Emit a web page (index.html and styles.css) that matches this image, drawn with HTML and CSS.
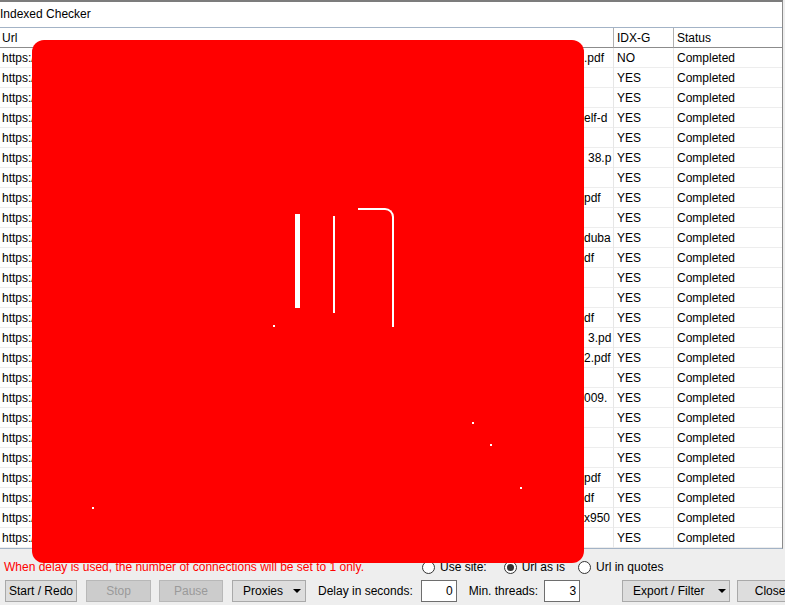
FILE: index.html
```html
<!DOCTYPE html>
<html lang="en">
<head>
  <meta charset="UTF-8">
  <title>Indexed Checker</title>
  <link rel="stylesheet" href="styles.css">
</head>
<body>
  <div class="panel">
    <div class="panel-title">Indexed Checker</div>

    <!-- Results grid -->
    <table class="results">
      <thead>
        <tr>
          <th class="col-url">Url</th>
          <th class="col-idx">IDX-G</th>
          <th class="col-status">Status</th>
        </tr>
      </thead>
      <tbody>
        <tr><td><div class="url"><span>https://</span><span class="tail">.pdf</span></div></td><td>NO</td><td>Completed</td></tr>
        <tr><td><div class="url"><span>https://</span><span class="tail"></span></div></td><td>YES</td><td>Completed</td></tr>
        <tr><td><div class="url"><span>https://</span><span class="tail"></span></div></td><td>YES</td><td>Completed</td></tr>
        <tr><td><div class="url"><span>https://</span><span class="tail">elf-d</span></div></td><td>YES</td><td>Completed</td></tr>
        <tr><td><div class="url"><span>https://</span><span class="tail"></span></div></td><td>YES</td><td>Completed</td></tr>
        <tr><td><div class="url"><span>https://</span><span class="tail shift">38.p</span></div></td><td>YES</td><td>Completed</td></tr>
        <tr><td><div class="url"><span>https://</span><span class="tail"></span></div></td><td>YES</td><td>Completed</td></tr>
        <tr><td><div class="url"><span>https://</span><span class="tail">pdf</span></div></td><td>YES</td><td>Completed</td></tr>
        <tr><td><div class="url"><span>https://</span><span class="tail"></span></div></td><td>YES</td><td>Completed</td></tr>
        <tr><td><div class="url"><span>https://</span><span class="tail">duba</span></div></td><td>YES</td><td>Completed</td></tr>
        <tr><td><div class="url"><span>https://</span><span class="tail">df</span></div></td><td>YES</td><td>Completed</td></tr>
        <tr><td><div class="url"><span>https://</span><span class="tail"></span></div></td><td>YES</td><td>Completed</td></tr>
        <tr><td><div class="url"><span>https://</span><span class="tail"></span></div></td><td>YES</td><td>Completed</td></tr>
        <tr><td><div class="url"><span>https://</span><span class="tail">df</span></div></td><td>YES</td><td>Completed</td></tr>
        <tr><td><div class="url"><span>https://</span><span class="tail shift">3.pd</span></div></td><td>YES</td><td>Completed</td></tr>
        <tr><td><div class="url"><span>https://</span><span class="tail">2.pdf</span></div></td><td>YES</td><td>Completed</td></tr>
        <tr><td><div class="url"><span>https://</span><span class="tail"></span></div></td><td>YES</td><td>Completed</td></tr>
        <tr><td><div class="url"><span>https://</span><span class="tail">009.</span></div></td><td>YES</td><td>Completed</td></tr>
        <tr><td><div class="url"><span>https://</span><span class="tail"></span></div></td><td>YES</td><td>Completed</td></tr>
        <tr><td><div class="url"><span>https://</span><span class="tail"></span></div></td><td>YES</td><td>Completed</td></tr>
        <tr><td><div class="url"><span>https://</span><span class="tail"></span></div></td><td>YES</td><td>Completed</td></tr>
        <tr><td><div class="url"><span>https://</span><span class="tail">pdf</span></div></td><td>YES</td><td>Completed</td></tr>
        <tr><td><div class="url"><span>https://</span><span class="tail">df</span></div></td><td>YES</td><td>Completed</td></tr>
        <tr><td><div class="url"><span>https://</span><span class="tail">x950</span></div></td><td>YES</td><td>Completed</td></tr>
        <tr><td><div class="url"><span>https://</span><span class="tail"></span></div></td><td>YES</td><td>Completed</td></tr>
      </tbody>
    </table>
  </div>

  <!-- Options + controls -->
  <div class="footer">
    <div class="options-row">
      <div class="warning">When delay is used, the number of connections will be set to 1 only.</div>
      <label class="radio first"><input type="radio" name="mode"> Use site:</label>
      <label class="radio second"><input type="radio" name="mode" checked> Url as is</label>
      <label class="radio"><input type="radio" name="mode"> Url in quotes</label>
    </div>
    <div class="controls-row">
      <button class="btn btn-start">Start / Redo</button>
      <button class="btn btn-stop" disabled>Stop</button>
      <button class="btn btn-pause" disabled>Pause</button>
      <button class="btn btn-menu btn-proxies">Proxies <span class="caret"></span></button>
      <span class="field-label delay-label">Delay in seconds:</span>
      <input class="num" type="text" value="0">
      <span class="field-label threads-label">Min. threads:</span>
      <input class="num" type="text" value="3">
      <button class="btn btn-menu btn-export">Export / Filter <span class="caret"></span></button>
      <button class="btn btn-close">Close</button>
    </div>
  </div>

  <!-- Redaction box over the grid -->
  <div class="redact">
    <div class="speck strip"></div>
    <div class="speck line"></div>
    <div class="speck corner"></div>
    <div class="speck dot" style="left: 241px; top: 285px;"></div>
    <div class="speck dot" style="left: 440px; top: 382px;"></div>
    <div class="speck dot" style="left: 458px; top: 404px;"></div>
    <div class="speck dot" style="left: 488px; top: 447px;"></div>
    <div class="speck dot" style="left: 60px; top: 467px;"></div>
  </div>
</body>
</html>
```

FILE: styles.css
```css
* {
  margin: 0;
  padding: 0;
  box-sizing: border-box;
}

body {
  background-color: #eeeeee;
  font-family: "Liberation Sans", Arial, sans-serif;
  font-size: 12px;
  color: #000;
  width: 785px;
  height: 605px;
  overflow: hidden;
  position: relative;
}

.panel {
  width: 783px;
  background-color: #fff;
  border-top: 2px solid #7c7c7c;
  border-right: 1px solid #8a8a8a;
  border-bottom: 1px solid #a3b3c6;
}

.panel-title {
  height: 25px;
  line-height: 25px;
}

/* Grid */
.results {
  width: 782px;
  table-layout: fixed;
  border-collapse: separate;
  border-spacing: 0;
  border-top: 1px solid #a3b3c6;
}

.results th {
  font-weight: normal;
  text-align: left;
  line-height: 17px;
  padding: 2px 0 0 3px;
  border-bottom: 1px solid #8c8c8c;
  border-right: 1px solid #b0b0b0;
}

.results th.col-url {
  width: 614px;
  padding-left: 2px;
}

.results th.col-idx {
  width: 60px;
}

.results th.col-status {
  border-right: none;
}

.results td {
  line-height: 17px;
  padding: 2px 2px 0 3px;
  white-space: nowrap;
  overflow: hidden;
  border-bottom: 1px solid #ededed;
  border-right: 1px solid #e6e6e6;
}

.results td:first-child {
  padding-left: 2px;
}

.results td:last-child {
  border-right: none;
}

.url {
  display: flex;
}

.tail {
  margin-left: auto;
  width: 27px;
  white-space: nowrap;
}

.tail.shift {
  padding-left: 4px;
}

/* Footer */
.footer {
  height: 56px;
}

.options-row {
  display: flex;
  align-items: center;
  height: 16px;
  margin-top: 10px;
}

.warning {
  color: #ff0000;
  width: 422px;
  padding-left: 4px;
  white-space: nowrap;
}

.radio {
  display: flex;
  align-items: center;
  gap: 5px;
  white-space: nowrap;
}

.radio.first {
  margin-right: 17px;
}

.radio.second {
  margin-right: 13px;
}

.radio input {
  appearance: none;
  width: 13px;
  height: 13px;
  border: 1px solid #333;
  border-radius: 50%;
  background-color: #fff;
  display: flex;
  align-items: center;
  justify-content: center;
}

.radio input:checked::after {
  content: "";
  width: 7px;
  height: 7px;
  border-radius: 50%;
  background-color: #333;
}

.controls-row {
  display: flex;
  align-items: center;
  margin-top: 5px;
  padding-left: 5px;
}

.btn {
  height: 22px;
  font-family: "Liberation Sans", Arial, sans-serif;
  font-size: 12px;
  color: #000;
  background-color: #dddddd;
  border: 1px solid #a9a9a9;
  display: flex;
  align-items: center;
  justify-content: center;
  flex-shrink: 0;
}

.btn:disabled {
  background-color: #cccccc;
  border-color: #b8b8b8;
  color: #9a9a9a;
}

.btn-start { width: 72px; }
.btn-stop { width: 65px; margin-left: 9px; }
.btn-pause { width: 64px; margin-left: 8px; }
.btn-proxies { width: 74px; margin-left: 9px; }
.btn-export { width: 108px; margin-left: 42px; }
.btn-close { width: 66px; margin-left: 7px; }

.btn-menu {
  justify-content: flex-start;
  padding-left: 10px;
}

.btn-proxies .caret { margin-left: 10px; }
.btn-export .caret { margin-left: 14px; }

.caret {
  display: inline-block;
  width: 0;
  height: 0;
  border-left: 4px solid transparent;
  border-right: 4px solid transparent;
  border-top: 4px solid #000;
}

.field-label {
  white-space: nowrap;
}

.delay-label { margin-left: 12px; margin-right: 8px; }
.threads-label { margin-left: 12px; margin-right: 6px; }

.num {
  width: 36px;
  height: 22px;
  border: 1px solid #6e6e6e;
  background-color: #fff;
  text-align: right;
  padding-right: 3px;
  font-family: "Liberation Sans", Arial, sans-serif;
  font-size: 12px;
  flex-shrink: 0;
}

/* Redaction overlay */
.redact {
  position: absolute;
  left: 32px;
  top: 40px;
  width: 552px;
  height: 523px;
  background-color: #ff0000;
  border-radius: 12px;
}

.speck {
  position: absolute;
}

.speck.strip {
  left: 263px;
  top: 174px;
  width: 5px;
  height: 94px;
  background-color: #fff;
}

.speck.line {
  left: 301px;
  top: 176px;
  width: 2px;
  height: 97px;
  background-color: #fff;
}

.speck.corner {
  left: 326px;
  top: 168px;
  width: 36px;
  height: 119px;
  border-top: 2px solid #fff;
  border-right: 2px solid #fff;
  border-top-right-radius: 9px;
}

.speck.dot {
  width: 2px;
  height: 2px;
  background-color: #fff;
}
```
